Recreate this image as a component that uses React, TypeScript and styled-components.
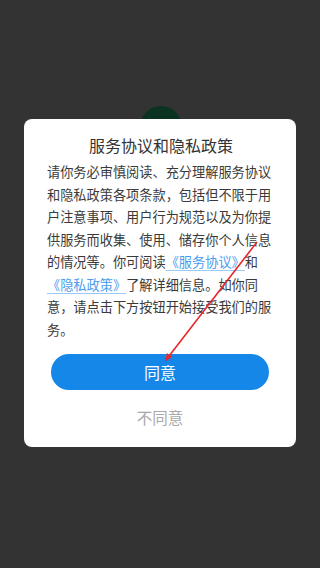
import React from 'react';
import styled, { createGlobalStyle } from 'styled-components';

const GlobalStyle = createGlobalStyle`
  html, body {
    margin: 0;
    padding: 0;
    background: #333333;
  }
  body {
    font-family: "Noto Sans CJK SC", "Noto Sans", sans-serif;
  }
`;

const Screen = styled.div`
  position: relative;
  width: 320px;
  height: 568px;
  overflow: hidden;
  background: #333333;
  padding-top: 119px;
  box-sizing: border-box;
`;

// avatar of the page underneath the dimmed overlay
const Avatar = styled.div`
  position: absolute;
  top: 106px;
  left: 140px;
  width: 42px;
  height: 42px;
  border-radius: 50%;
  background: #0a3322;
`;

const Dialog = styled.div`
  position: relative;
  width: 272px;
  margin: 0 auto 0 24px;
  box-sizing: border-box;
  padding: 14px 21px 19px 23px;
  background: #ffffff;
  border-radius: 8px;
  display: flex;
  flex-direction: column;
`;

const Title = styled.h2`
  margin: 0 0 4px;
  font-size: 16px;
  line-height: 24px;
  font-weight: 400;
  color: #333333;
  text-align: center;
`;

const Body = styled.p`
  margin: 0;
  font-size: 13.2px;
  line-height: 22.5px;
  color: #3a3a3a;
  text-align: left;
  word-break: break-all;
`;

const Link = styled.a`
  color: #4a9cf0;
  text-decoration: underline;
  text-decoration-color: #9ccaf6;
  text-underline-offset: 3px;
`;

const Actions = styled.div`
  display: flex;
  flex-direction: column;
  align-items: center;
  margin-top: 13px;
  margin-left: -2px;
`;

const AgreeButton = styled.button`
  width: 218px;
  height: 36px;
  border: none;
  border-radius: 18px;
  background: #1487e8;
  color: #ffffff;
  font-family: inherit;
  font-size: 16px;
  padding: 0;
  cursor: pointer;
`;

const DeclineButton = styled.button`
  margin-top: 16px;
  border: none;
  background: none;
  padding: 0;
  font-family: inherit;
  font-size: 15.5px;
  line-height: 22px;
  color: #a8a8a8;
  cursor: pointer;
`;

const Annotation = styled.svg`
  position: absolute;
  inset: 0;
  pointer-events: none;
`;

export default function App() {
  return (
    <>
      <GlobalStyle />
      <Screen>
        <Avatar />
        <Dialog>
          <Title>服务协议和隐私政策</Title>
          <Body>
            请你务必审慎阅读、充分理解服务协议和隐私政策各项条款，包括但不限于用户注意事项、用户行为规范以及为你提供服务而收集、使用、储存你个人信息的情况等。你可阅读<Link>《服务协议》</Link>和<Link>《隐私政策》</Link>了解详细信息。如你同意，请点击下方按钮开始接受我们的服务。
          </Body>
          <Actions>
            <AgreeButton>同意</AgreeButton>
            <DeclineButton>不同意</DeclineButton>
          </Actions>
        </Dialog>
        <Annotation width="320" height="568" viewBox="0 0 320 568">
          <line x1="257" y1="242" x2="166" y2="360" stroke="#e8262a" strokeWidth="1.6" />
          <polygon points="165,361.5 172,357 167,353" fill="#e8262a" />
        </Annotation>
      </Screen>
    </>
  );
}
